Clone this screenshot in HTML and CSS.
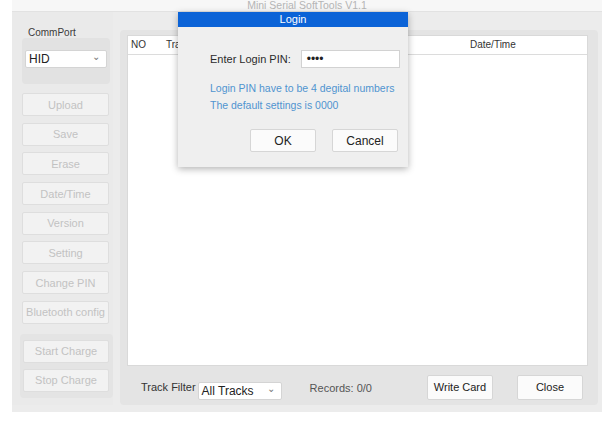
FILE: index.html
```html
<!DOCTYPE html>
<html lang="en">
<head>
  <meta charset="UTF-8">
  <title>Mini Serial SoftTools V1.1</title>
  <link rel="stylesheet" href="styles.css">
</head>
<body>

  <div class="titlebar"><div class="title">Mini Serial SoftTools V1.1</div></div>

  <div class="window">
    <div class="left">
      <div class="label">CommPort</div>
      <div class="portbox">
        <div class="combo combo-port"><span>HID</span><span class="arrow">⌄</span></div>
      </div>

      <div class="btns">
        <div class="btn off">Upload</div>
        <div class="btn off">Save</div>
        <div class="btn off">Erase</div>
        <div class="btn off">Date/Time</div>
        <div class="btn off">Version</div>
        <div class="btn off">Setting</div>
        <div class="btn off">Change PIN</div>
        <div class="btn off">Bluetooth config</div>
      </div>

      <div class="chargebox">
        <div class="btn off">Start Charge</div>
        <div class="btn off">Stop Charge</div>
      </div>
    </div>

    <div class="right">
      <div class="table">
        <div class="thead">
          <span class="col-no">NO</span>
          <span class="col-track">Track No</span>
          <span class="col-date">Date/Time</span>
        </div>
      </div>
      <div class="bottom">
        <span class="filter-label">Track Filter</span>
        <div class="combo combo-filter"><span>All Tracks</span><span class="arrow">⌄</span></div>
        <span class="records">Records: 0/0</span>
        <div class="btn write">Write Card</div>
        <div class="btn close">Close</div>
      </div>
    </div>
  </div>

  <!-- login popup over the main window -->
  <div class="dialog">
    <div class="dialog-title">Login</div>
    <div class="pin-row">
      <span class="pin-label">Enter Login PIN:</span>
      <div class="pin-input">••••</div>
    </div>
    <div class="hints">
      <div class="hint">Login PIN have to be 4 degital numbers</div>
      <div class="hint">The default settings is 0000</div>
    </div>
    <div class="dialog-btns">
      <div class="btn dbtn">OK</div>
      <div class="btn dbtn">Cancel</div>
    </div>
  </div>

</body>
</html>
```

FILE: styles.css
```css
body {
  margin: 0;
  background: #fff;
  font-family: 'Liberation Sans', Arial, sans-serif;
  font-size: 11px;
  color: #333;
}

.titlebar {
  height: 11px;
  background: #f7f7f7;
  border-bottom: 1px solid #e2e2e2;
  overflow: hidden;
  margin-left: 12px;
  width: 590px;
}

.title {
  text-align: center;
  color: #b5b5b5;
  font-size: 10.5px;
  line-height: 10px;
}

.window {
  margin-left: 12px;
  width: 590px;
  height: 400px;
  background: #ececec;
  display: flex;
}

.left {
  width: 101px;
  background: #eaeaea;
  height: 393px;
}

.label {
  margin: 15px 0 0 16px;
  font-size: 10px;
  line-height: 11px;
  color: #3a3a3a;
}

.portbox {
  margin: 0 0 0 10px;
  width: 88px;
  height: 46px;
  background: #e2e2e2;
  border-radius: 4px;
  box-sizing: border-box;
  padding: 12px 3px 0 3px;
}

.combo {
  display: flex;
  justify-content: space-between;
  align-items: center;
  background: #fff;
  border: 1px solid #d4d4d4;
  border-radius: 2px;
  box-sizing: border-box;
  padding: 0 6px 0 3px;
  color: #222;
}

.combo .arrow {
  font-size: 10px;
  color: #777;
  line-height: 8px;
  margin-top: -4px;
}

.combo-port {
  height: 18px;
  font-size: 12px;
}

.btns {
  margin: 9px 0 0 10px;
  width: 87px;
  display: flex;
  flex-direction: column;
  gap: 6.7px;
}

.btn {
  height: 23px;
  box-sizing: border-box;
  background: #fbfbfb;
  border: 1px solid #d6d6d6;
  border-radius: 2px;
  display: flex;
  align-items: center;
  justify-content: center;
  color: #222;
  font-size: 11px;
  white-space: nowrap;
}

.btn.off {
  background: #f2f2f2;
  border-color: #dedede;
  color: #c2c2c2;
}

.chargebox {
  margin: 10px 0 0 8px;
  width: 93px;
  height: 64px;
  background: #e4e4e4;
  border-radius: 4px;
  box-sizing: border-box;
  padding: 6px 4px 0 3px;
  display: flex;
  flex-direction: column;
  gap: 6px;
}

.right {
  margin: 18px 0 0 7px;
  width: 478px;
  height: 375px;
  background: #e4e4e4;
  border-radius: 4px;
  box-sizing: border-box;
  padding: 5px 10px 0 7px;
}

.table {
  height: 331px;
  background: #fff;
  border: 1px solid #d9d9d9;
  box-sizing: border-box;
}

.thead {
  height: 18px;
  border-bottom: 1px solid #dcdcdc;
  position: relative;
  font-size: 10px;
  line-height: 18px;
  color: #333;
}

.thead span { position: absolute; top: 0; }
.col-no { left: 3px; }
.col-track { left: 38px; }
.col-date { left: 342px; }

.bottom {
  display: flex;
  align-items: center;
  height: 38px;
  padding: 6px 0 0 14px;
  box-sizing: border-box;
}

.filter-label {
  color: #333;
  font-size: 11px;
  margin-top: -2px;
}

.combo-filter {
  margin: 5px 0 0 2px;
  width: 84px;
  height: 18px;
  font-size: 12px;
}

.records {
  margin-left: 28px;
  color: #555;
  font-size: 11px;
}

.btn.write {
  margin: -2px 0 0 55px;
  width: 66px;
  height: 25px;
}

.btn.close {
  margin: -2px 0 0 24px;
  width: 66px;
  height: 25px;
}

.dialog {
  position: absolute;
  left: 178px;
  top: 12px;
  width: 230px;
  height: 155px;
  background: #efefef;
  box-shadow: 0 2px 7px rgba(0, 0, 0, 0.3);
}

.dialog-title {
  height: 15px;
  background: #0b63d7;
  color: #fff;
  text-align: center;
  font-size: 11px;
  line-height: 14px;
}

.pin-row {
  display: flex;
  align-items: center;
  margin: 23px 0 0 32px;
}

.pin-label {
  font-size: 11px;
  color: #2b2b2b;
}

.pin-input {
  margin-left: 10px;
  width: 99px;
  height: 18px;
  box-sizing: border-box;
  background: #fff;
  border: 1px solid #d2d2d2;
  font-size: 12px;
  line-height: 16px;
  padding-left: 5px;
  color: #222;
}

.hints {
  margin: 12px 0 0 32px;
}

.hint {
  color: #4f94cf;
  font-size: 10.5px;
  line-height: 17px;
}

.dialog-btns {
  display: flex;
  gap: 16px;
  margin: 15px 0 0 72px;
}

.btn.dbtn {
  width: 66px;
  height: 23px;
  font-size: 12px;
}
```
